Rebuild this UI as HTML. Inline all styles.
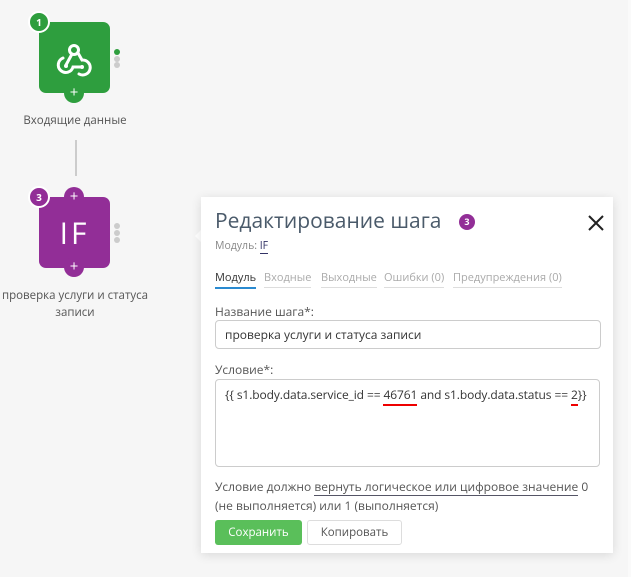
<!DOCTYPE html>
<html><head><meta charset="utf-8"><style>
body{margin:0;width:631px;height:577px;background:#f6f6f6;font-family:"Open Sans","Liberation Sans","DejaVu Sans",sans-serif;position:relative;overflow:hidden;color:#444}
.abs{position:absolute}
.box{position:absolute;left:39px;width:71px;height:71px;border-radius:7px}
.badge{position:absolute;width:18px;height:18px;border-radius:50%;border:2px solid #fff;color:#fff;font-size:10px;font-weight:bold;text-align:center;line-height:18px}
.plus{position:absolute;width:20px;height:20px;border-radius:50%;color:#fff;font-size:15px;text-align:center;line-height:19px}
.dot{position:absolute;width:6px;height:6px;border-radius:50%;background:#ccc}
.lbl{position:absolute;font-size:12px;color:#555;text-align:center}
.panel{position:absolute;left:201px;top:197px;width:412px;height:356px;background:#fff;box-shadow:0 2px 10px rgba(0,0,0,.12)}
.tab{position:absolute;top:73px;font-size:11px;color:#aaa;border-bottom:1px solid #ddd;padding-bottom:2px}
.inp{position:absolute;left:14px;width:384px;border:1px solid #ccc;border-radius:4px;font-size:12px;color:#333}
</style></head><body>
<div class="abs" style="left:75px;top:140px;width:2px;height:36px;background:#ccc"></div>
<div class="box" style="top:22px;background:#2e9e3e"></div>
<svg class="abs" style="left:55px;top:39px" width="38" height="38" viewBox="0 0 38 38" fill="none" stroke="#fff" stroke-width="3" stroke-linecap="round">
<circle cx="19" cy="11" r="4.5"/>
<path d="M17 15 L11 26"/>
<circle cx="11" cy="27" r="2" fill="#fff" stroke="none"/>
<path d="M8 19 A7.5 7.5 0 1 0 18 28 H27"/>
<circle cx="27" cy="28" r="2" fill="#fff" stroke="none"/>
<path d="M23 14 L27 21 A7.5 7.5 0 1 1 24 35" />
</svg>
<div class="badge" style="left:28px;top:11px;background:#2e9e3e">1</div>
<div class="plus" style="left:64px;top:83px;background:#2e9e3e">+</div>
<div class="dot" style="left:114px;top:49px;background:#2e9e3e"></div>
<div class="dot" style="left:114px;top:56px"></div>
<div class="dot" style="left:114px;top:62px"></div>
<div class="lbl" style="left:0;width:150px;top:113px;font-size:11.5px">Входящие данные</div>

<div class="box" style="top:197px;background:#922e97;color:#fff;font-size:30px;text-align:center;line-height:71px;letter-spacing:3px">IF</div>
<div class="badge" style="left:28px;top:186px;background:#922e97">3</div>
<div class="plus" style="left:64px;top:187px;background:#922e97">+</div>
<div class="plus" style="left:64px;top:257px;background:#922e97">+</div>
<div class="dot" style="left:114px;top:223px"></div>
<div class="dot" style="left:114px;top:230px"></div>
<div class="dot" style="left:114px;top:237px"></div>
<div class="lbl" style="left:-6px;width:162px;top:287px;line-height:17px;font-size:11.5px">проверка услуги и статуса записи</div>

<div class="abs" style="left:195px;top:229px;width:0;height:0;border-top:7px solid transparent;border-bottom:7px solid transparent;border-right:7px solid #fff"></div>
<div class="panel">
<div class="abs" style="left:14px;top:10px;font-size:21px;color:#4a5a6a">Редактирование шага</div>
<div class="badge" style="left:258px;top:17px;width:16px;height:16px;line-height:16px;border:0;background:#922e97;font-size:9px">3</div>
<svg class="abs" style="left:386px;top:17px" width="18" height="18"><path d="M2 2L16 16M16 2L2 16" stroke="#222" stroke-width="2"/></svg>
<div class="abs" style="left:14px;top:42px;font-size:10.5px;color:#888">Модуль: <span style="color:#336;border-bottom:1px solid #336">IF</span></div>
<div class="tab" style="left:14px;color:#333;border-bottom:2px solid #2a8ad0">Модуль</div>
<div class="tab" style="left:63px">Входные</div>
<div class="tab" style="left:120px">Выходные</div>
<div class="tab" style="left:183px">Ошибки (0)</div>
<div class="tab" style="left:252px">Предупреждения (0)</div>
<div class="abs" style="left:14px;top:106px;font-size:12px;color:#555">Название шага*:</div>
<div class="inp" style="top:123px;height:27px;line-height:27px;padding-left:9px;width:375px">проверка услуги и статуса записи</div>
<div class="abs" style="left:14px;top:164px;font-size:12px;color:#555">Условие*:</div>
<div class="inp" style="top:182px;height:88px;padding:6px 9px;box-sizing:border-box;width:385px;white-space:nowrap;letter-spacing:-0.1px">{{ s1.body.data.service_id == <span style="border-bottom:2px solid #e00;padding-bottom:1px">46761</span> and s1.body.data.status == <span style="border-bottom:2px solid #e00;padding-bottom:1px">2</span>}}</div>
<div class="abs" style="left:14px;top:280px;width:385px;font-size:12px;color:#555;line-height:19px">Условие должно <span style="border-bottom:1px solid #556">вернуть логическое или цифровое значение</span> 0 (не выполняется) или 1 (выполняется)</div>
<div class="abs" style="left:14px;top:323px;width:87px;height:25px;border-radius:3px;background:#5abf5a;color:#fff;font-size:11.5px;text-align:center;line-height:25px">Сохранить</div>
<div class="abs" style="left:106px;top:323px;width:93px;height:23px;border:1px solid #ddd;border-radius:3px;color:#555;font-size:11.5px;text-align:center;line-height:23px">Копировать</div>
</div>
<div class="abs" style="left:628px;top:0;width:3px;height:577px;background:#fafafa"></div>
</body></html>
